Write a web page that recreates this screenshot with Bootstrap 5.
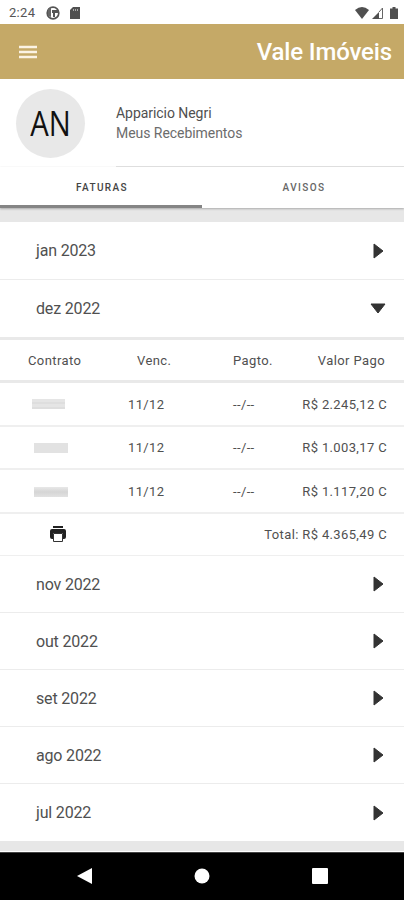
<!DOCTYPE html>
<html lang="pt-BR">
<head>
<meta charset="utf-8">
<meta name="viewport" content="width=device-width, initial-scale=1">
<title>Vale Imóveis</title>
<link rel="stylesheet" href="https://cdn.jsdelivr.net/npm/bootstrap@5.3.0/dist/css/bootstrap.min.css">
<style>
body{font-family:Roboto,"Liberation Sans",sans-serif;color:#505050;background:#e7e7e7;height:900px;overflow:hidden;line-height:1.2}
svg{display:block;flex:none}
.status{height:24px;padding:1px 6px 0 9px;font-size:13px;letter-spacing:.3px;color:#555}
.clock-icon{margin-left:11px}
.card-icon{margin-left:10px}
.signal{margin-left:3px}
.battery{margin-left:7px}
.appbar{height:55px;padding:0 12px 0 19px;background:#c5a967}
.brand{font-size:24px;font-weight:500;color:#fff;letter-spacing:-.15px;padding-top:1px}
.profile{height:88px;padding-left:16px}
.avatar{width:69px;height:69px;margin:10px 31px 0 0;background:#e8e8e8;color:#111;font:34px "Open Sans","Noto Sans",sans-serif}
.avatar span{transform:scaleX(.86);padding-bottom:2px}
.who{border-bottom:1px solid #e2e2e2;font-size:14px;line-height:20px;padding-top:24px;letter-spacing:-.05px}
.who .sub{color:#6c6c6c}
.tabbar{height:41px;box-shadow:0 1px 2px #aaa;position:relative}
.tabbar .tabitem{font-size:10px;font-weight:500;letter-spacing:1.4px;color:#666;border-bottom:3px solid transparent;padding:3px 0 0 2px}
.tabbar .tabitem.active{border-color:#858585;color:#444}
.months{margin-top:14px}
.month{height:57px;padding:1px 20px 0 36px;font-size:16px;letter-spacing:-.17px;border-bottom:1px solid #ececec}
.month.first{height:58px}
.month.open{height:60px;padding-top:0;border-bottom:3px solid #e9e9e9;padding-right:18px}
.line{height:43.67px;font-size:13px;letter-spacing:.36px;padding:1px 17px 0 0;border-bottom:2px solid #efefef}
.line.heads{height:43px;padding-right:19px;border-bottom:3px solid #e9e9e9;letter-spacing:.4px}
.line.total{height:42px;padding-left:50px;padding-top:0;border-bottom-width:1px}
.c1{width:128px;padding-left:32px}.c2{width:105px}
.heads .c1{width:137px;padding-left:28px}.heads .c2{width:96px}
.masked{width:33px;height:10px;background:repeating-linear-gradient(#e5e5e5 0 3px,#dedede 3px 5px)}
.masked.m2{width:34px;margin-left:2px;background:#e2e2e2}
.masked.m3{width:34px;margin-left:2px;background:linear-gradient(#e8e8e8,#d5d5d5 50%,#e2e2e2)}
.sysnav{height:49px;background:#000;border-top:1px solid #fff;padding-left:77px;gap:102px;box-shadow:inset 0 1px #444}
</style>
</head>
<body class="d-flex flex-column">
<div class="status bg-white d-flex align-items-center">
  <span>2:24</span>
  <svg class="clock-icon" width="14" height="14" viewBox="0 0 14 14"><circle cx="7" cy="7" r="5.8" fill="none" stroke="#555" stroke-width="1.7"/><path d="M6 4h6v3H9v4H7V7H6z" fill="#555"/><path d="M2 3L5 1v10L2 10z" fill="#666"/></svg>
  <svg class="card-icon" width="10" height="12" viewBox="0 0 10 12"><path d="M3 0h7v12H0V3z" fill="#505050"/><path d="M3.5 2v2M5.5 2v2M7.5 2v2" stroke="#aaa"/></svg>
  <svg class="ms-auto" width="14" height="12" viewBox="0 0 14 12"><path d="M0 3Q7-3 14 3L7 12z" fill="#505050"/></svg>
  <svg class="signal" width="11" height="12" viewBox="0 0 11 12"><path d="M0 12L7 5v7z" fill="#505050"/><path d="M7 5l3.5-4v10.5H7" fill="none" stroke="#666"/></svg>
  <svg class="battery" width="8" height="12" viewBox="0 0 8 12"><path d="M2.5 0h3v1.5H8V12H0V1.500h2.500z" fill="#505050"/></svg>
</div>
<header class="appbar d-flex align-items-center justify-content-between">
  <svg width="18" height="14" viewBox="0 0 18 14"><path d="M0 2h18M0 7h18M0 12h18" stroke="#fbf3e4" stroke-width="2.400"/></svg>
  <span class="brand">Vale Imóveis</span>
</header>
<section class="profile bg-white d-flex">
  <div class="avatar rounded-circle d-flex align-items-center justify-content-center flex-shrink-0"><span>AN</span></div>
  <div class="who flex-grow-1"><div>Apparicio Negri</div><div class="sub">Meus Recebimentos</div></div>
</section>
<nav class="tabbar bg-white d-flex">
  <div class="tabitem active w-50 d-flex align-items-center justify-content-center">FATURAS</div>
  <div class="tabitem w-50 d-flex align-items-center justify-content-center">AVISOS</div>
</nav>
<main class="months bg-white">
  <div class="month first d-flex align-items-center justify-content-between"><span>jan 2023</span><svg width="11" height="16" viewBox="0 0 11 16"><path d="M1 1v14l9-7z" fill="#333" stroke="#333"/></svg></div>
  <div class="month open d-flex align-items-center justify-content-between"><span>dez 2022</span><svg width="16" height="11" viewBox="0 0 16 11"><path d="M1 1h14L8 10z" fill="#333" stroke="#333"/></svg></div>
  <div class="line heads d-flex align-items-center"><span class="c1">Contrato</span><span class="c2">Venc.</span><span>Pagto.</span><span class="ms-auto">Valor Pago</span></div>
  <div class="line d-flex align-items-center"><div class="c1"><div class="masked"></div></div><span class="c2">11/12</span><span>--/--</span><span class="ms-auto">R$ 2.245,12 C</span></div>
  <div class="line d-flex align-items-center"><div class="c1"><div class="masked m2"></div></div><span class="c2">11/12</span><span>--/--</span><span class="ms-auto">R$ 1.003,17 C</span></div>
  <div class="line d-flex align-items-center"><div class="c1"><div class="masked m3"></div></div><span class="c2">11/12</span><span>--/--</span><span class="ms-auto">R$ 1.117,20 C</span></div>
  <div class="line total d-flex align-items-center justify-content-between"><svg width="16" height="16" viewBox="0 0 16 16"><path d="M3 0h10v2H3zM2 3h12q2 0 2 2v6q0 2-2 2h-1V7H3v6H2q-2 0-2-2V5q0-2 2-2z" fill="#222"/><path d="M3.500 7.500h9v8h-9z" fill="#fff" stroke="#333"/></svg><span>Total: R$ 4.365,49 C</span></div>
  <div class="month d-flex align-items-center justify-content-between"><span>nov 2022</span><svg width="11" height="16" viewBox="0 0 11 16"><path d="M1 1v14l9-7z" fill="#333" stroke="#333"/></svg></div>
  <div class="month d-flex align-items-center justify-content-between"><span>out 2022</span><svg width="11" height="16" viewBox="0 0 11 16"><path d="M1 1v14l9-7z" fill="#333" stroke="#333"/></svg></div>
  <div class="month d-flex align-items-center justify-content-between"><span>set 2022</span><svg width="11" height="16" viewBox="0 0 11 16"><path d="M1 1v14l9-7z" fill="#333" stroke="#333"/></svg></div>
  <div class="month d-flex align-items-center justify-content-between"><span>ago 2022</span><svg width="11" height="16" viewBox="0 0 11 16"><path d="M1 1v14l9-7z" fill="#333" stroke="#333"/></svg></div>
  <div class="month border-bottom-0 d-flex align-items-center justify-content-between"><span>jul 2022</span><svg width="11" height="16" viewBox="0 0 11 16"><path d="M1 1v14l9-7z" fill="#333" stroke="#333"/></svg></div>
</main>
<footer class="sysnav mt-auto d-flex align-items-center">
  <svg width="15" height="16" viewBox="0 0 15 16"><path d="M0 8L15 0v16z" fill="#fff"/></svg>
  <svg width="16" height="16" viewBox="0 0 16 16"><circle cx="8" cy="8" r="7.500" fill="#fff"/></svg>
  <svg width="16" height="16" viewBox="0 0 16 16"><rect width="16" height="16" rx="1" fill="#fff"/></svg>
</footer>
<script src="https://cdn.jsdelivr.net/npm/bootstrap@5.3.0/dist/js/bootstrap.bundle.min.js"></script>
</body>
</html>
